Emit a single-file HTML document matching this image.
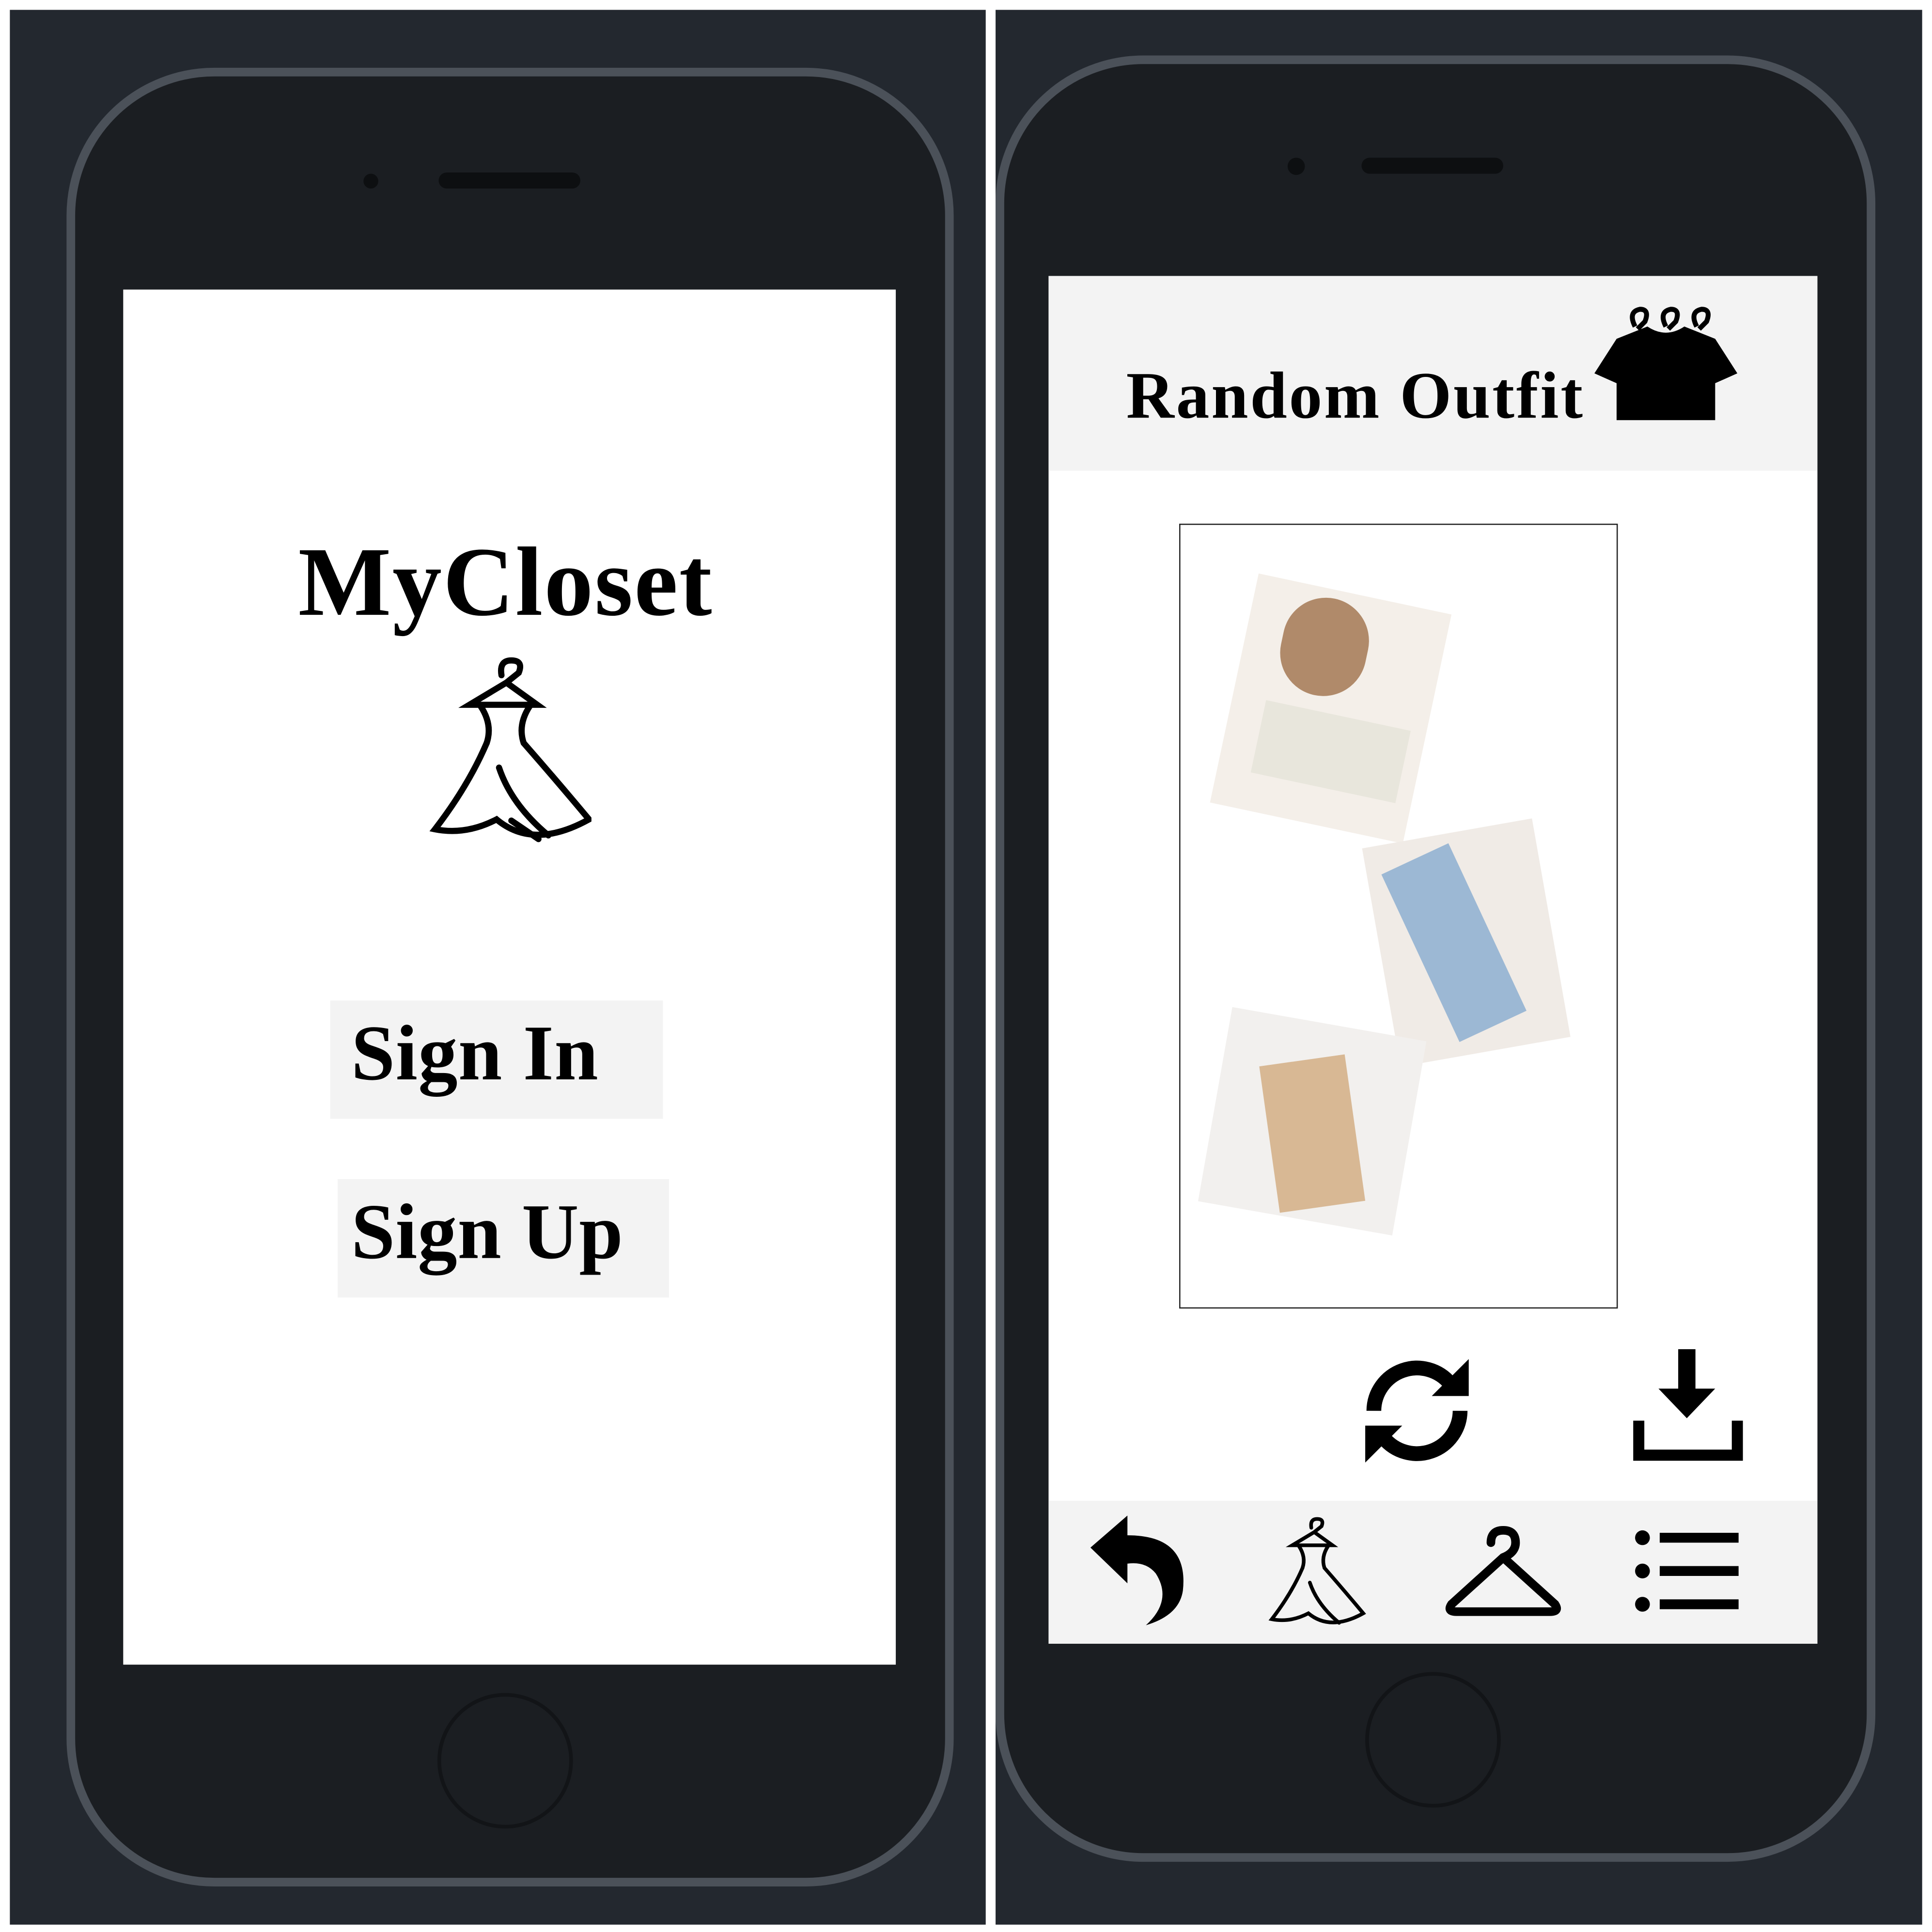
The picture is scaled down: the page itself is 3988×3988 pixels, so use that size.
<!DOCTYPE html>
<html><head><meta charset="utf-8"><style>
html,body{margin:0;padding:0;background:#fff;width:3988px;height:3988px;overflow:hidden}
#w{position:absolute;left:0;top:0;width:1568px;height:1568px;transform:scale(2.5434);transform-origin:0 0}
.a{position:absolute}
.panel{background:#23282f}
.phone{background:#1b1e22;border:7px solid #4b5159;box-sizing:border-box}
.t{font-family:"Liberation Serif",serif;font-weight:bold;color:#000;white-space:nowrap;letter-spacing:-1px}
</style></head><body><div id="w">
<div class="a panel" style="left:8px;top:8px;width:792px;height:1554px"></div>
<div class="a panel" style="left:808px;top:8px;width:752px;height:1554px"></div>

<!-- left phone -->
<div class="a phone" style="left:54px;top:55px;width:720px;height:1476px;border-radius:120px"></div>
<div class="a" style="left:295px;top:141px;width:12px;height:12px;border-radius:6px;background:#0d0f11"></div>
<div class="a" style="left:356px;top:140px;width:115px;height:13px;border-radius:7px;background:#0d0f11"></div>
<div class="a" style="left:100px;top:235px;width:627px;height:1116px;background:#fff"></div>
<div class="a t" style="left:242px;top:428px;font-size:80px;letter-spacing:1px">MyCloset</div>
<svg class="a" style="left:345px;top:528px" width="135" height="160" viewBox="0 0 135 160" fill="none" stroke="#000" stroke-width="5" stroke-linecap="round">
<path d="M62 20 q-2-12 8-12 q10 0 6 10 l-10 8 l-30 18 h55 l-25-18"/>
<path d="M45 45 q10 15 5 30 M85 45 q-10 15-5 30"/>
<path d="M50 75 q-15 35-42 70 q25 5 50-8 q30 25 75 0 q-25-30-53-62"/>
<path d="M60 95 q10 30 40 55 M70 138 l22 15"/>
</svg>
<div class="a" style="left:268px;top:812px;width:270px;height:96px;background:#f3f3f3"></div>
<div class="a t" style="left:285px;top:818px;font-size:64px;letter-spacing:0.5px">Sign In</div>
<div class="a" style="left:274px;top:957px;width:269px;height:96px;background:#f3f3f3"></div>
<div class="a t" style="left:285px;top:963px;font-size:64px;letter-spacing:0.3px">Sign Up</div>
<div class="a" style="left:355px;top:1374px;width:110px;height:110px;border-radius:60px;border:3px solid #121417;box-sizing:border-box"></div>

<!-- right phone -->
<div class="a phone" style="left:808px;top:45px;width:714px;height:1466px;border-radius:120px"></div>
<div class="a" style="left:1045px;top:128px;width:14px;height:14px;border-radius:7px;background:#0d0f11"></div>
<div class="a" style="left:1105px;top:128px;width:115px;height:13px;border-radius:7px;background:#0d0f11"></div>
<div class="a" style="left:851px;top:224px;width:624px;height:1110px;background:#fff"></div>
<div class="a" style="left:851px;top:224px;width:624px;height:158px;background:#f3f3f3"></div>
<div class="a t" style="left:914px;top:290px;font-size:54px;letter-spacing:1.5px">Random Outfit</div>
<svg class="a" style="left:1292px;top:243px" width="120" height="102" viewBox="0 0 120 102">
<g fill="none" stroke="#000" stroke-width="4"><path d="M35 22 q-6-12 4-14 q8 0 4 10 l-6 6 M60 22 q-6-12 4-14 q8 0 4 10 l-6 6 M85 22 q-6-12 4-14 q8 0 4 10 l-6 6"/></g>
<path d="M20 32 l25-10 q15 10 30 0 l25 10 l18 28 l-18 8 v30 h-80 v-30 l-18-8z" fill="#000"/>
</svg>
<div class="a" style="left:957px;top:425px;width:356px;height:637px;border:1.5px solid #222;box-sizing:border-box"></div>
<div class="a" style="left:1000px;top:480px;width:160px;height:190px;background:#f4efe9;transform:rotate(12deg)"></div>
<div class="a" style="left:1040px;top:485px;width:70px;height:80px;border-radius:35px;background:#b08a6a;transform:rotate(12deg)"></div>
<div class="a" style="left:1020px;top:580px;width:120px;height:60px;background:#e8e6dc;transform:rotate(12deg)"></div>
<div class="a" style="left:1120px;top:675px;width:140px;height:180px;background:#f0ebe6;transform:rotate(-10deg)"></div>
<div class="a" style="left:1150px;top:690px;width:60px;height:150px;background:#9cb8d4;transform:rotate(-25deg)"></div>
<div class="a" style="left:985px;top:830px;width:160px;height:160px;background:#f2f0ee;transform:rotate(10deg)"></div>
<div class="a" style="left:1030px;top:860px;width:70px;height:120px;background:#d8b894;transform:rotate(-8deg)"></div>
<svg class="a" style="left:1100px;top:1095px" width="100" height="100" viewBox="0 0 100 100" fill="none" stroke="#000" stroke-width="12">
<path d="M15 50 a35 35 0 0 1 62-22"/><path d="M85 50 a35 35 0 0 1-62 22"/>
<path d="M92 8 v30 h-30z M8 92 v-30 h30z" fill="#000" stroke="none"/>
</svg>
<svg class="a" style="left:1322px;top:1095px" width="95" height="92" viewBox="0 0 95 92">
<path d="M40 0 h14 v32 h16 l-23 24 l-23-24 h16z" fill="#000"/>
<path d="M8 58 v28 h80 v-28" fill="none" stroke="#000" stroke-width="9"/>
</svg>
<div class="a" style="left:851px;top:1218px;width:624px;height:116px;background:#f3f3f3"></div>
<svg class="a" style="left:885px;top:1228px" width="80" height="92" viewBox="0 0 80 92">
<path d="M0 28 l30-26 v16 q50 0 45 45 q-3 20-30 28 q22-20 8-42 q-8-10-23-8 v16z" fill="#000"/>
</svg>
<svg class="a" style="left:1025px;top:1228px" width="85" height="95" viewBox="0 0 135 160" fill="none" stroke="#000" stroke-width="5" stroke-linecap="round">
<path d="M62 20 q-2-12 8-12 q10 0 6 10 l-10 8 l-30 18 h55 l-25-18"/>
<path d="M45 45 q10 15 5 30 M85 45 q-10 15-5 30"/>
<path d="M50 75 q-15 35-42 70 q25 5 50-8 q30 25 75 0 q-25-30-53-62"/>
<path d="M60 95 q10 30 40 55"/>
</svg>
<svg class="a" style="left:1172px;top:1238px" width="95" height="75" viewBox="0 0 95 75" fill="none" stroke="#000" stroke-width="7" stroke-linecap="round">
<path d="M38 14 q0-10 10-10 q10 0 10 10 q0 8-10 12 l-42 38 q-4 6 4 6 h76 q8 0 4-6 l-42-38"/>
</svg>
<svg class="a" style="left:1325px;top:1240px" width="88" height="70" viewBox="0 0 88 70" fill="#000">
<circle cx="8" cy="8" r="6"/><circle cx="8" cy="35" r="6"/><circle cx="8" cy="62" r="6"/>
<rect x="22" y="4" width="64" height="8"/><rect x="22" y="31" width="64" height="8"/><rect x="22" y="58" width="64" height="8"/>
</svg>
<div class="a" style="left:1108px;top:1357px;width:110px;height:110px;border-radius:60px;border:3px solid #121417;box-sizing:border-box"></div>
</div></body></html>
